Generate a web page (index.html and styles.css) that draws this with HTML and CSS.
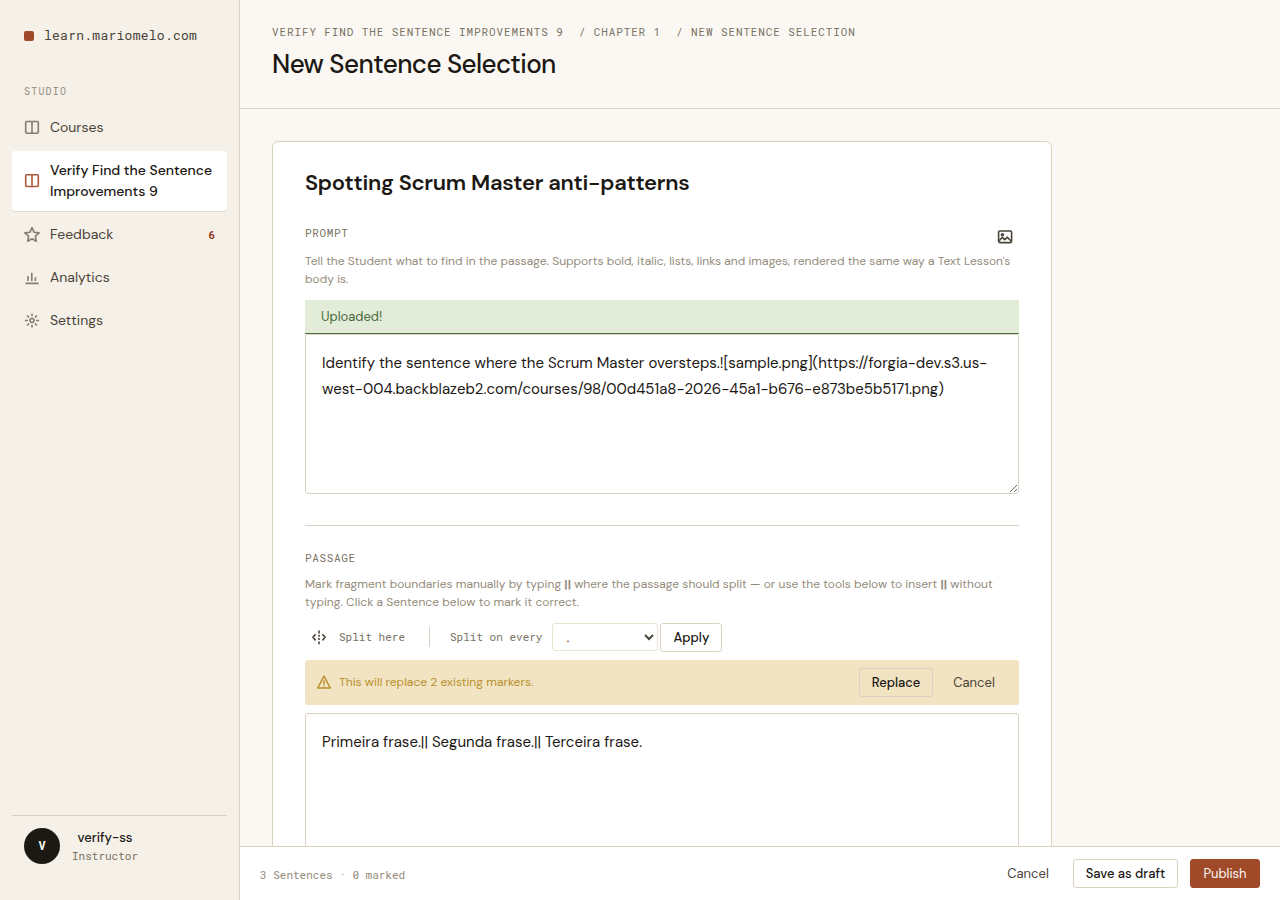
FILE: index.html
```html
<!DOCTYPE html>
<html lang="en">
<head>
<meta charset="UTF-8">
<title>New Sentence Selection</title>
<link rel="stylesheet" href="styles.css">
</head>
<body>

<div class="app">
  <aside class="sidebar">
    <div class="brand"><span class="brand-mark"></span><span class="brand-name">learn.mariomelo.com</span></div>
    <div class="nav-label">Studio</div>
    <nav class="nav">
      <a class="nav-item">
        <svg class="icon" viewBox="0 0 16 16"><rect x="1.7" y="1.5" width="12.6" height="11.8" rx="1"/><path d="M8 1.5v11.8"/></svg>
        <span>Courses</span>
      </a>
      <a class="nav-item active">
        <svg class="icon" viewBox="0 0 16 16"><rect x="1.7" y="1.7" width="12.6" height="11.8" rx="1"/><path d="M8 1.7v11.8"/></svg>
        <span>Verify Find the Sentence<br>Improvements 9</span>
      </a>
      <a class="nav-item">
        <svg class="icon" viewBox="0 0 16 16"><path d="M8 .7l2.1 4.6 5 .6-3.7 3.3.9 5L8 11.8l-4.3 2.4.9-5L.9 5.9l5-.6z"/></svg>
        <span>Feedback</span>
        <span class="nav-count">6</span>
      </a>
      <a class="nav-item">
        <svg class="icon" viewBox="0 0 16 16"><path d="M1.5 13.4h13M4 11V6M7.8 11V2.8M11.4 11V7.2"/></svg>
        <span>Analytics</span>
      </a>
      <a class="nav-item">
        <svg class="icon" viewBox="0 0 16 16"><circle cx="8" cy="7.5" r="2"/><path d="M8 .5v2.8M8 11.7v2.8M.9 7.5h3M12.1 7.5h3M3 2.5l2 2M11 10.5l2 2M3 12.5l2-2M11 4.5l2-2"/></svg>
        <span>Settings</span>
      </a>
    </nav>
    <div class="user">
      <div class="avatar">V</div>
      <div class="user-info">
        <div class="user-name">verify-ss</div>
        <div class="user-role">Instructor</div>
      </div>
    </div>
  </aside>

  <div class="main">
    <header class="page-header">
      <div class="crumbs"><span>Verify Find the Sentence Improvements 9</span><span>/ Chapter 1</span><span>/ New Sentence Selection</span></div>
      <h1>New Sentence Selection</h1>
    </header>

    <div class="content">
      <form class="card">
        <h2>Spotting Scrum Master anti-patterns</h2>

        <div class="field-head">
          <label>Prompt</label>
          <svg class="icon icon-image" viewBox="0 0 16 16"><rect x="1.6" y="2" width="13" height="11.6" rx="1.3"/><circle cx="5.4" cy="5.7" r="1"/><path d="M2 12l3.3-3.7 2.5 2.4 2.3-2.5 4 3.8"/></svg>
        </div>
        <p class="help">Tell the Student what to find in the passage. Supports bold, italic, lists, links and images, rendered the same way a Text Lesson's<br>body is.</p>
        <div class="uploaded">Uploaded!</div>
        <textarea class="prompt">Identify the sentence where the Scrum Master oversteps.![sample.png](https://forgia-dev.s3.us-
west-004.backblazeb2.com/courses/98/00d451a8-2026-45a1-b676-e873be5b5171.png)</textarea>

        <hr>

        <label class="passage-label">Passage</label>
        <p class="help">Mark fragment boundaries manually by typing <b>||</b> where the passage should split — or use the tools below to insert <b>||</b> without<br>typing. Click a Sentence below to mark it correct.</p>
        <div class="tools">
          <svg class="icon icon-split" viewBox="0 0 16 16"><path d="M8 .6v2.8M8 4.7v2M8 8.1v2M8 11.4v2.8M4.6 4.2L1.9 7.3l2.7 3.1M11.4 4.2l2.7 3.1-2.7 3.1"/></svg>
          <span class="tool-label">Split here</span>
          <span class="sep"></span>
          <span class="tool-label">Split on every</span>
          <select><option>.</option></select>
          <button type="button" class="btn btn-apply">Apply</button>
        </div>
        <div class="warning">
          <svg class="icon" viewBox="0 0 16 16"><path d="M8 1.2L14.3 13H1.7zM8 5.4v4M8 10.6v1"/></svg>
          <span>This will replace 2 existing markers.</span>
          <button type="button" class="btn btn-replace">Replace</button>
          <button type="button" class="btn btn-ghost">Cancel</button>
        </div>
        <textarea class="passage">Primeira frase.|| Segunda frase.|| Terceira frase.</textarea>
      </form>
    </div>

    <footer class="bar">
      <span class="status">3 Sentences · 0 marked</span>
      <button class="btn btn-ghost">Cancel</button>
      <button class="btn btn-draft">Save as draft</button>
      <button class="btn btn-primary">Publish</button>
    </footer>
  </div>
</div>

</body>
</html>
```

FILE: styles.css
```css
* { box-sizing: border-box; }
:root {
  --sans: "DM Sans", Inter, sans-serif;
  --mono: "Roboto Mono", "Liberation Mono", monospace;
}
body {
  margin: 0;
  font-family: var(--sans);
  font-size: 14px;
  color: #1c1814;
  background: #fbf8f3;
}
.app {
  display: flex;
  height: 900px;
  overflow: hidden;
}
.icon {
  width: 16px;
  height: 16px;
  flex: none;
  fill: none;
  stroke: currentColor;
  stroke-width: 1.6;
  stroke-linejoin: round;
}

/* sidebar */
.sidebar {
  width: 240px;
  flex: none;
  display: flex;
  flex-direction: column;
  padding: 24px 12px;
  background: #f5f0e8;
  border-right: 1px solid #d8d2bf;
}
.brand {
  display: flex;
  align-items: center;
  gap: 10px;
  height: 24px;
  padding-left: 12px;
  font: 13px var(--mono);
  letter-spacing: .26px;
  color: #4a4438;
}
.brand-mark {
  width: 10px;
  height: 10px;
  border-radius: 2px;
  background: #a04a2a;
}
.brand-name { padding-bottom: 2px; }
.nav-label {
  height: 16px;
  margin: 36px 0 8px;
  padding-left: 12px;
  font: 10px/16px var(--mono);
  letter-spacing: 1.2px;
  text-transform: uppercase;
  color: #948b7a;
}
.nav {
  display: flex;
  flex-direction: column;
  gap: 4px;
}
.nav-item {
  display: flex;
  align-items: center;
  gap: 10px;
  padding: 9px 12px;
  line-height: 21px;
  font-size: 14px;
  color: #4a4438;
  border-radius: 3px;
}
.nav-item .icon { color: #857d6e; }
.nav-item.active {
  background: #fff;
  font-weight: 500;
  white-space: nowrap;
  color: #1c1814;
  box-shadow: 0 1px 1px rgba(28, 24, 20, .1);
}
.nav-item.active .icon { color: #a9583a; }
.nav-count {
  margin-left: auto;
  font: bold 11px/21px var(--mono);
  color: #8f3c20;
}
.user {
  display: flex;
  gap: 12px;
  height: 61px;
  margin-top: auto;
  padding: 12px 12px 0;
  border-top: 1px solid #d8d2bf;
}
.avatar {
  width: 36px;
  height: 36px;
  border-radius: 50%;
  background: #1c1814;
  color: #fbf8f3;
  font: bold 12px/35px var(--mono);
  text-align: center;
}
.user-name {
  font-size: 13px;
  font-weight: 500;
  line-height: 20px;
  text-align: center;
}
.user-role {
  font: 11px/15px var(--mono);
  color: #7a7264;
}

/* main column */
.main {
  flex: 1;
  min-width: 0;
  display: flex;
  flex-direction: column;
}
.page-header {
  flex: none;
  height: 109px;
  padding: 24px 32px;
  border-bottom: 1px solid #dcd2c4;
}
.crumbs {
  display: flex;
  gap: 15px;
  font: 11px/15px var(--mono);
  letter-spacing: .88px;
  text-transform: uppercase;
  color: #7a7264;
}
h1 {
  margin: 8px 0 0;
  font-size: 26px;
  font-weight: 500;
  line-height: 34px;
  letter-spacing: -.6px;
}
.content {
  flex: 1;
  min-height: 0;
  overflow: hidden;
  padding: 32px;
}
.card {
  width: 780px;
  height: 1000px;
  padding: 24px 32px;
  background: #fff;
  border: 1px solid #d8d2bf;
  border-radius: 6px;
}
h2 {
  margin: 0;
  font-size: 22px;
  font-weight: 600;
  line-height: 34px;
  letter-spacing: -.27px;
}
label {
  display: block;
  font: 11px/15px var(--mono);
  letter-spacing: .66px;
  text-transform: uppercase;
  color: #7a7264;
}
.field-head {
  display: flex;
  justify-content: space-between;
  height: 28px;
  margin-top: 24px;
  padding-right: 6px;
}
.field-head label { padding-top: 1px; }
.icon-image {
  margin-top: 5px;
  color: #4a4438;
}
.help {
  margin: 0 -20px 0 0;
  font-size: 12px;
  line-height: 18px;
  letter-spacing: .024px;
  color: #948b7a;
  white-space: nowrap;
}
.uploaded {
  height: 34px;
  margin-top: 12px;
  padding-left: 16px;
  font-size: 13px;
  line-height: 33px;
  color: #4a6b3d;
  background: #e3ecd9;
  border-bottom: 1px solid #4a6b3d;
}
textarea {
  display: block;
  width: 714px;
  height: 160px;
  padding: 15px 16px;
  font: 15px/26px var(--sans);
  color: #1c1814;
  background: #fff;
  border: 1px solid #dcd2c4;
  border-radius: 3px;
}
.prompt { white-space: pre; overflow: hidden; }
hr {
  height: 1px;
  margin: 31px 0 24px;
  border: 0;
  background: #dcd2c4;
}
.passage-label { margin-bottom: 10px; }
.help b { font-weight: 700; }
.tools {
  display: flex;
  align-items: center;
  height: 29px;
  margin-top: 12px;
  padding-left: 6px;
}
.icon-split { color: #4a4438; }
.tool-label {
  margin-left: 12px;
  padding-bottom: 2px;
  font: 11px var(--mono);
  white-space: nowrap;
  color: #7a7264;
}
.sep {
  width: 1px;
  height: 20px;
  margin: 0 8px 1px 24px;
  background: #dcd2c4;
}
select {
  width: 106px;
  height: 28px;
  margin: 0 2px 1px 10px;
  padding: 0 7px;
  font: 11px var(--mono);
  color: #4a4438;
  background: #fff;
  border: 1px solid #e9e3d4;
  border-radius: 3px;
}
.btn {
  height: 29px;
  padding: 0;
  font: 500 13px var(--sans);
  color: #1c1814;
  background: transparent;
  border: 1px solid #dcd2c4;
  border-radius: 3px;
}
.btn-apply { width: 62px; }
.btn-replace { width: 74px; margin-left: auto; }
.btn-ghost {
  width: 66px;
  margin-left: 8px;
  font-weight: 400;
  color: #4a4438;
  border-color: transparent;
}
.warning {
  display: flex;
  align-items: center;
  height: 45px;
  margin: 8px 0;
  padding: 0 12px 0 11px;
  font-size: 12px;
  color: #b8902c;
  background: #f2e3c2;
  border-radius: 3px;
}
.warning span {
  margin: 0 0 1px 7px;
  letter-spacing: .024px;
}
.warning .icon { stroke-width: 1.5; }
.passage { height: 240px; }

/* bottom bar */
.bar {
  flex: none;
  display: flex;
  align-items: center;
  height: 54px;
  padding: 0 20px;
  background: #fff;
  border-top: 1px solid #d8d2bf;
}
.status {
  margin-right: auto;
  padding-top: 1px;
  font: 11px var(--mono);
  color: #948b7a;
}
.btn-draft { width: 105px; margin: 0 12px; }
.btn-primary {
  width: 70px;
  font-weight: 400;
  color: #fbf8f3;
  background: #a04a2a;
  border-color: #a04a2a;
}
```
